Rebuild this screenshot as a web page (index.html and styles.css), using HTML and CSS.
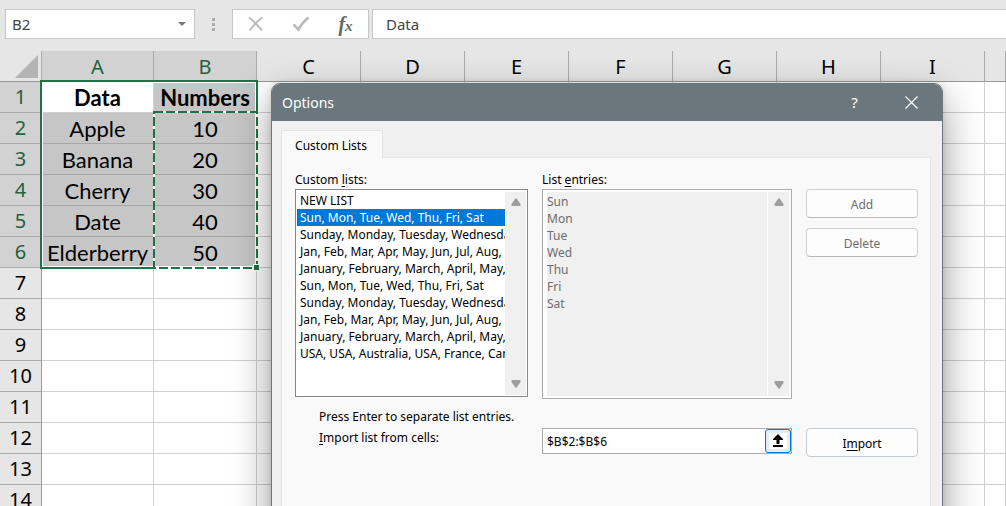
FILE: index.html
```
<!DOCTYPE html>
<html lang="en">
<head>
<meta charset="utf-8">
<title>Custom Lists</title>
<link rel="stylesheet" href="styles.css">
</head>
<body>
<div class="app">
  <header class="formula-bar">
    <div class="name-box">
      <input class="name-input" type="text" value="B2" aria-label="Name box">
      <button class="name-arrow" type="button" aria-label="Show names"><svg width="8" height="4" viewBox="0 0 8 4"><path d="M0 0h8L4 4z" fill="#777"/></svg></button>
    </div>
    <div class="grip"><i></i><i></i><i></i></div>
    <div class="formula-tools">
      <button type="button" aria-label="Cancel"><svg width="18" height="16" viewBox="0 0 18 16"><path d="M2 1.500C7 5 11 10 15 14.500M15.500 1.500C10 5 6 10 2.500 14.500" fill="none" stroke="#bcbcbc" stroke-width="2"/></svg></button>
      <button type="button" aria-label="Enter"><svg width="18" height="16" viewBox="0 0 18 16"><path d="M1.500 8.500L6.500 13.500C9 9 12 5 16.500 1.500" fill="none" stroke="#bcbcbc" stroke-width="2.800"/></svg></button>
      <button class="fx" type="button" aria-label="Insert function"><span class="fx-f">f</span><span class="fx-x">x</span></button>
    </div>
    <input class="formula-input" type="text" value="Data" aria-label="Formula">
  </header>

  <main class="sheet">
    <table class="grid">
      <colgroup><col class="col-head"><col class="col-a"><col class="col-b"><col class="col"><col class="col"><col class="col"><col class="col"><col class="col"><col class="col"><col class="col"><col></colgroup>
      <thead>
        <tr><th class="corner"><svg width="23" height="23" viewBox="0 0 23 23"><path d="M23 0v23H0z" fill="#b4b4b4"/></svg></th><th class="on">A</th><th class="on">B</th><th>C</th><th>D</th><th>E</th><th>F</th><th>G</th><th>H</th><th>I</th><th></th></tr>
      </thead>
      <tbody>
        <tr><th class="on">1</th><td class="title">Data</td><td class="title sel">Numbers</td><td></td><td></td><td></td><td></td><td></td><td></td><td></td><td></td></tr>
        <tr><th class="on">2</th><td class="sel">Apple</td><td class="sel">10</td><td></td><td></td><td></td><td></td><td></td><td></td><td></td><td></td></tr>
        <tr><th class="on">3</th><td class="sel">Banana</td><td class="sel">20</td><td></td><td></td><td></td><td></td><td></td><td></td><td></td><td></td></tr>
        <tr><th class="on">4</th><td class="sel">Cherry</td><td class="sel">30</td><td></td><td></td><td></td><td></td><td></td><td></td><td></td><td></td></tr>
        <tr><th class="on">5</th><td class="sel">Date</td><td class="sel">40</td><td></td><td></td><td></td><td></td><td></td><td></td><td></td><td></td></tr>
        <tr><th class="on">6</th><td class="sel">Elderberry</td><td class="sel">50</td><td></td><td></td><td></td><td></td><td></td><td></td><td></td><td></td></tr>
        <tr><th>7</th><td></td><td></td><td></td><td></td><td></td><td></td><td></td><td></td><td></td><td></td></tr>
        <tr><th>8</th><td></td><td></td><td></td><td></td><td></td><td></td><td></td><td></td><td></td><td></td></tr>
        <tr><th>9</th><td></td><td></td><td></td><td></td><td></td><td></td><td></td><td></td><td></td><td></td></tr>
        <tr><th>10</th><td></td><td></td><td></td><td></td><td></td><td></td><td></td><td></td><td></td><td></td></tr>
        <tr><th>11</th><td></td><td></td><td></td><td></td><td></td><td></td><td></td><td></td><td></td><td></td></tr>
        <tr><th>12</th><td></td><td></td><td></td><td></td><td></td><td></td><td></td><td></td><td></td><td></td></tr>
        <tr><th>13</th><td></td><td></td><td></td><td></td><td></td><td></td><td></td><td></td><td></td><td></td></tr>
        <tr><th>14</th><td></td><td></td><td></td><td></td><td></td><td></td><td></td><td></td><td></td><td></td></tr>
      </tbody>
    </table>
    <svg class="selection" width="220" height="192" viewBox="0 0 220 192">
      <rect x="1" y="1" width="216" height="187" fill="none" stroke="#217346" stroke-width="2"/>
      <rect x="2.500" y="2.500" width="213" height="184" fill="none" stroke="#fff"/>
      <path d="M114 32H217V188H114Z" fill="none" stroke="#fff" stroke-width="2"/>
      <path d="M114 32H217V188H114Z" fill="none" stroke="#217346" stroke-width="2" stroke-dasharray="9 3"/>
      <path d="M213 184h7v7h-7z" fill="#fff"/>
      <path d="M214 185h5v5h-5z" fill="#217346"/>
    </svg>
  </main>

  <section class="dialog" role="dialog" aria-labelledby="dialog-title">
    <div class="title-bar">
      <h1 id="dialog-title">Options</h1>
      <button class="help" type="button">?</button>
      <button type="button" aria-label="Close"><svg width="13" height="13" viewBox="0 0 13 13"><path d="M.5.5l12 12M12.500.5l-12 12" stroke="#fff" stroke-width="1.200"/></svg></button>
    </div>
    <div class="dialog-body">
      <div class="tabs"><button class="tab" type="button">Custom Lists</button></div>
      <div class="panel">
        <label class="caption" for="lists">Custom <u>l</u>ists:</label>
        <label class="caption" for="entries">List <u>e</u>ntries:</label>
        <span></span>

        <div class="listbox">
          <select id="lists" class="lists" size="11">
            <option>NEW LIST</option>
            <option selected>Sun, Mon, Tue, Wed, Thu, Fri, Sat</option>
            <option>Sunday, Monday, Tuesday, Wednesday, Thursday</option>
            <option>Jan, Feb, Mar, Apr, May, Jun, Jul, Aug, Sep, Oct</option>
            <option>January, February, March, April, May, June</option>
            <option>Sun, Mon, Tue, Wed, Thu, Fri, Sat</option>
            <option>Sunday, Monday, Tuesday, Wednesday, Thursday</option>
            <option>Jan, Feb, Mar, Apr, May, Jun, Jul, Aug, Sep, Oct</option>
            <option>January, February, March, April, May, June</option>
            <option>USA, USA, Australia, USA, France, Canada</option>
          </select>
          <div class="scroll"><svg width="10" height="8" viewBox="0 0 10 8"><path d="M4.200.8Q5-.2 5.800.8L9.500 6Q9.800 8 8.500 8H1.500Q.2 8 .5 6z" fill="#9d9d9d"/></svg><svg width="10" height="8" viewBox="0 0 10 8"><path d="M4.200 7.200Q5 8.200 5.800 7.200L9.500 2Q9.800 0 8.500 0H1.500Q.2 0 .5 2z" fill="#9d9d9d"/></svg></div>
        </div>

        <div class="listbox entries-box">
          <textarea id="entries" class="entries" disabled>Sun
Mon
Tue
Wed
Thu
Fri
Sat</textarea>
          <div class="scroll"><svg width="10" height="8" viewBox="0 0 10 8"><path d="M4.200.8Q5-.2 5.800.8L9.500 6Q9.800 8 8.500 8H1.500Q.2 8 .5 6z" fill="#9d9d9d"/></svg><svg width="10" height="8" viewBox="0 0 10 8"><path d="M4.200 7.200Q5 8.200 5.800 7.200L9.500 2Q9.800 0 8.500 0H1.500Q.2 0 .5 2z" fill="#9d9d9d"/></svg></div>
        </div>

        <div class="actions">
          <button class="push" type="button" disabled>Add</button>
          <button class="push" type="button" disabled>Delete</button>
        </div>

        <div class="notes">
          <p>Press Enter to separate list entries.</p>
          <label for="range"><u>I</u>mport list from cells:</label>
        </div>
        <div class="range">
          <input id="range" type="text" value="$B$2:$B$6">
          <button class="collapse" type="button" aria-label="Collapse dialog"><svg width="18" height="16" viewBox="0 0 18 16"><path d="M0 0h18v16H0z" fill="#fff"/><path d="M9 1l5 5v1h-3.500v4h-3V7H4V6zM4 12h10v2H4z" fill="#000"/></svg></button>
        </div>
        <button class="push import" type="button">I<u>m</u>port</button>
      </div>
    </div>
  </section>
</div>
</body>
</html>
```
FILE: styles.css
```
* { box-sizing: border-box; }

body {
  margin: 0;
  background: #e6e6e6;
  color: #000;
  font: 12px/17px "Noto Sans", "Open Sans", sans-serif;
}

button, input, select, textarea { font: inherit; color: inherit; margin: 0; }
button { display: flex; align-items: center; justify-content: center; padding: 0; border: 0; background: none; }
input { min-width: 0; border: 0; padding: 0; outline: 0; background: none; }
svg { display: block; }
u { text-underline-offset: 2px; }

.app { position: relative; height: 100vh; overflow: hidden; }

/* Formula bar */
.formula-bar { display: flex; height: 51px; padding: 9px 0 12px 5px; color: #444; font-size: 15px; }
.name-box, .formula-tools, .formula-input { border: 1px solid #c6c6c6; background: #fff; }
.name-box { display: flex; width: 190px; padding-left: 6px; }
.name-input { flex: 1; }
.name-arrow { width: 24px; }
.grip { display: flex; flex-direction: column; justify-content: center; align-items: center; gap: 2px; width: 37px; }
.grip i { width: 3px; height: 3px; background: #aaa; }
.formula-tools { display: flex; width: 137px; margin-right: 3px; }
.formula-tools button { flex: 1; }
.fx { color: #666; font-family: "Liberation Serif", serif; font-style: italic; font-weight: bold; }
.fx-f { font-size: 20px; }
.fx-x { padding-top: 4px; font-size: 15px; }
.formula-input { flex: 1; padding-left: 13px; border-right: 0; }

/* Worksheet */
.sheet { position: relative; }
.grid { width: 100%; table-layout: fixed; border-spacing: 0; background: #fff; }
.col-head { width: 42px; }
.col-a { width: 112px; }
.col-b { width: 103px; }
.col { width: 104px; }
.grid th, .grid td {
  height: 31px;
  padding: 0;
  border: solid #d0d0d0;
  border-width: 0 1px 1px 0;
  line-height: 30px;
  text-align: center;
  white-space: nowrap;
}
.grid th { background: #e6e6e6; font-size: 20px; font-weight: normal; border-bottom-color: #ababab; }
.grid thead th { border-right-color: #ababab; border-bottom-color: #999; padding-top: 1px; height: 31px; line-height: 29px; }
.grid tbody th { border-right-color: #999; }
.grid th.on { background: #d2d2d2; color: #1f6140; }
.grid thead .corner { padding: 0 3px 3px 15px; vertical-align: bottom; background: #e6e6e6; }
.grid td { padding-top: 2px; line-height: 28px; font-family: Lato, "Noto Sans", sans-serif; font-size: 22px; }
.grid .title { font-weight: bold; }
.grid .sel { background: #c6c6c6; border-color: #a6a6a6; }
.selection { position: absolute; left: 40px; top: 29px; }

/* Dialog */
.dialog {
  position: absolute;
  left: 271px;
  right: 63px;
  top: 83px;
  bottom: -40px;
  display: flex;
  flex-direction: column;
  overflow: hidden;
  border: 1px solid #6a787d;
  border-radius: 9px;
  background: #f0f0f0;
  box-shadow: 0 16px 40px rgba(0, 0, 0, .4), 0 0 6px rgba(0, 0, 0, .12);
}
.title-bar { display: flex; align-items: center; height: 37px; padding: 0 2px 0 10px; background: #6a787d; color: #fff; }
.title-bar h1 { flex: 1; margin: 0; font-size: 14px; font-weight: normal; }
.title-bar button { width: 57px; height: 37px; font-size: 15px; }
.dialog-body { flex: 1; display: flex; flex-direction: column; padding: 9px 11px 0 9px; }
.tabs { display: flex; }
.tab { position: relative; width: 102px; height: 28px; margin-bottom: -1px; padding: 2px 2px 0 0; border: 1px solid #e5e5e5; border-bottom: 0; background: #f9f9f9; }
.panel {
  flex: 1;
  display: grid;
  grid-template-columns: minmax(0, 233fr) minmax(0, 250fr) minmax(0, 112fr);
  grid-template-rows: auto auto 1fr;
  column-gap: 14px;
  padding: 13px 12px 14px 13px;
  border: 1px solid #e5e5e5;
  background: #f9f9f9;
}
.caption { height: 18px; }
.listbox { display: flex; height: 208px; border: 1px solid #828790; padding: 2px 1px 1px; background: #fff; }
.lists { flex: 1; min-width: 0; height: 203px; padding: 0; border: 0; outline: 0; overflow: hidden; background: #fff; scrollbar-width: none; }
.lists option { min-height: 17px; height: 17px; padding: 0 0 0 3px; line-height: 17px; overflow: hidden; white-space: nowrap; }
.lists option:checked { background: #0078d7 linear-gradient(#0078d7, #0078d7); color: #fff; }
.scroll { display: flex; flex-direction: column; align-items: center; justify-content: space-between; width: 21px; padding: 6px 0 7px; background: #f0f0f0; }
.entries-box { height: 210px; padding: 2px 2px 2px 4px; border-color: #abadb3; gap: 1px; }
.entries { flex: 1; min-width: 0; padding: 1px 0; border: 0; resize: none; overflow: hidden; background: #f0f0f0; color: #6d6d6d; }
.actions { display: flex; flex-direction: column; gap: 10px; }
.push { width: 100%; height: 29px; padding-top: 2px; border: 1px solid #d0d0d0; border-bottom-color: #bababa; border-radius: 4px; background: #fdfdfd; }
.push:disabled { color: #6d6d6d; }
.notes { display: flex; flex-direction: column; gap: 4px; padding: 9px 0 0 24px; white-space: nowrap; }
.notes p { margin: 0; }
.range { display: flex; height: 26px; margin-top: 29px; padding-left: 4px; border: 1px solid #abadb3; background: #fff; }
.range input { flex: 1; }
.collapse { width: 26px; border: 1px solid #0078d7; border-radius: 3px; background: #e0eef9; }
.import { margin-top: 29px; border-color: #c3ccd3; }
```
